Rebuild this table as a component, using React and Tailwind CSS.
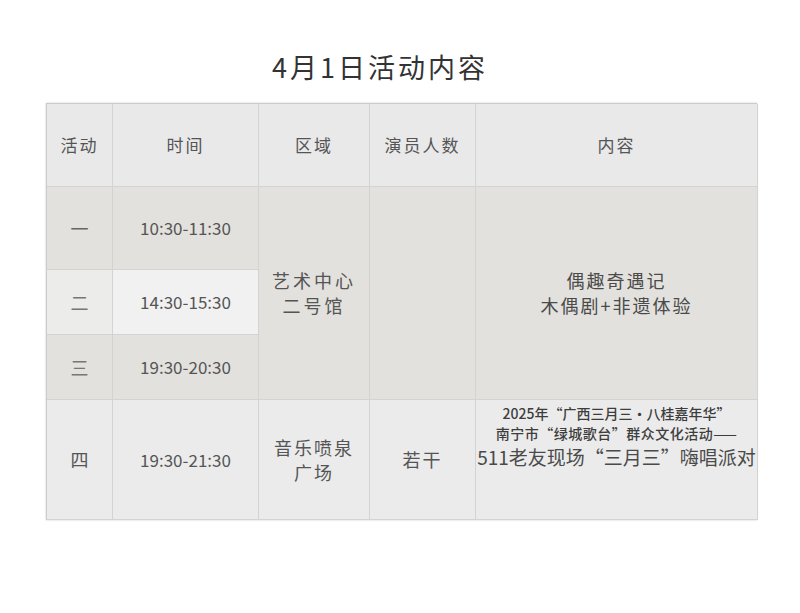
import React from 'react';

const font = { fontFamily: '"Noto Sans CJK SC", "Noto Sans", sans-serif' };

const Cell = ({ className = '', children }) => (
  <div className={`flex flex-col items-center justify-center text-center border-r border-b border-[#d3d3d1] ${className}`}>
    {children}
  </div>
);

const headers = ['活动', '时间', '区域', '演员人数', '内容'];

const App = () => {
  return (
    <div className="w-[800px] h-[613px] bg-white text-[#4a4a4a]" style={font}>
      <div className="pt-[48px] pr-[40px] text-center">
        <h1 className="text-[27px] leading-[38px] tracking-[3px] text-[#333]">4月1日活动内容</h1>
      </div>

      <div className="ml-[46px] mt-[17px] w-[711px] border-l border-t border-[#cbcbcb] shadow-[0_0_2px_rgba(0,0,0,0.2)] grid grid-cols-[66px_146px_111px_106px_282px] grid-rows-[83px_83px_65px_65px_120px]">
        {headers.map((h) => (
          <Cell key={h} className="bg-[#e9e9e9] text-[17px] tracking-[2px] text-[#555]">{h}</Cell>
        ))}

        <Cell className="bg-[#e2e1dd] text-[18px] text-[#666]">一</Cell>
        <Cell className="bg-[#e2e1dd] text-[17px] text-[#555]">10:30-11:30</Cell>
        <Cell className="row-span-3 bg-[#e2e1dd] text-[18px] leading-[25px] tracking-[3px] text-[#555]">
          <span>艺术中心</span>
          <span>二号馆</span>
        </Cell>
        <Cell className="row-span-3 bg-[#e2e1dd]" />
        <Cell className="row-span-3 bg-[#e2e1dd] text-[18px] leading-[25px] tracking-[2px] text-[#4a4a4a]">
          <span>偶趣奇遇记</span>
          <span>木偶剧+非遗体验</span>
        </Cell>

        <Cell className="bg-[#ececea] text-[18px] text-[#777]">二</Cell>
        <Cell className="bg-[#f1f1f1] text-[17px] text-[#555]">14:30-15:30</Cell>

        <Cell className="bg-[#e2e1dd] text-[18px] text-[#777]">三</Cell>
        <Cell className="bg-[#e2e1dd] text-[17px] text-[#555]">19:30-20:30</Cell>

        <Cell className="bg-[#ebebeb] text-[18px] text-[#555]">四</Cell>
        <Cell className="bg-[#ebebeb] text-[17px] text-[#555]">19:30-21:30</Cell>
        <Cell className="bg-[#ebebeb] text-[18px] leading-[25px] tracking-[2px] text-[#555]">
          <span>音乐喷泉</span>
          <span>广场</span>
        </Cell>
        <Cell className="bg-[#ebebeb] text-[18px] tracking-[2px] text-[#555]">若干</Cell>
        <div className="flex flex-col items-center justify-start pt-[3px] text-center border-r border-b border-[#d3d3d1] bg-[#ebebeb]">
          <span className="text-[14px] leading-[20px] font-medium text-[#3d3d3d]">2025年“广西三月三·八桂嘉年华”</span>
          <span className="text-[14px] leading-[20px] font-medium text-[#3d3d3d] tracking-[0.5px]">南宁市“绿城歌台”群众文化活动——</span>
          <span className="text-[19px] leading-[28px] text-[#4a4a4a]">511老友现场“三月三”嗨唱派对</span>
        </div>
      </div>
    </div>
  );
};

export default App;
